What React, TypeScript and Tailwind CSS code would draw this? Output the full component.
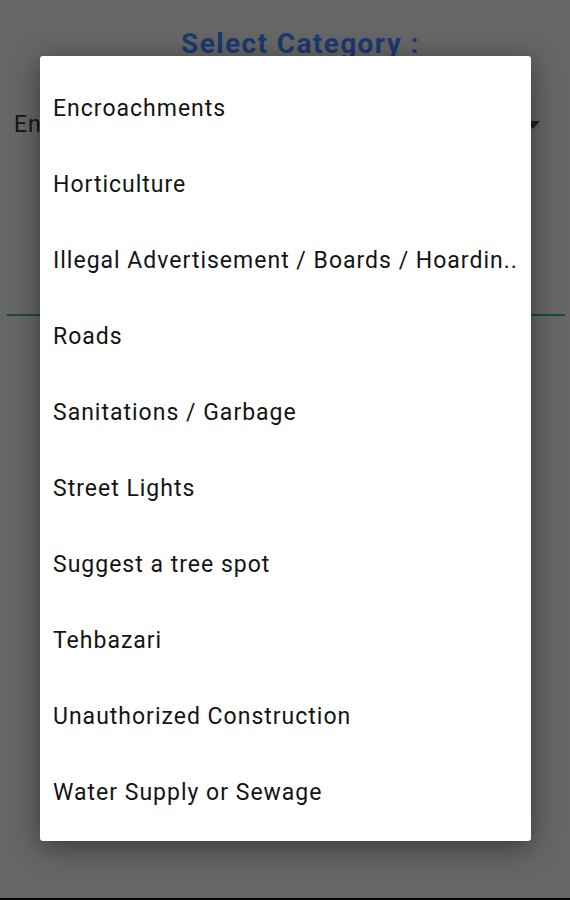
import React from "react";

const items = [
  "Encroachments",
  "Horticulture",
  "Illegal Advertisement / Boards / Hoardin..",
  "Roads",
  "Sanitations / Garbage",
  "Street Lights",
  "Suggest a tree spot",
  "Tehbazari",
  "Unauthorized Construction",
  "Water Supply or Sewage",
];

export default function App() {
  return (
    <div
      className="relative w-[570px] h-[900px] overflow-hidden bg-[#666666] flex flex-col"
      style={{ fontFamily: "Roboto, 'Noto Sans', sans-serif" }}
    >
      {/* background page (dimmed) */}
      <div className="flex-1 flex flex-col">
        <div className="pt-[28px] pl-[181px] text-[28px] leading-[32px] font-bold tracking-[1.4px] text-[#1a396f]">
          Select Category :
        </div>
        <div className="mt-[45px] flex items-center justify-between pl-[14px] pr-[30px] h-[40px]">
          <span className="w-[26px] overflow-hidden whitespace-nowrap text-[23px] tracking-[1px] text-[#151515]">
            Encroachments
          </span>
          <span className="w-0 h-0 border-l-[7px] border-r-[7px] border-t-[8px] border-l-transparent border-r-transparent border-t-[#222222]" />
        </div>
        <div className="mt-[169px] ml-[7px] mr-[5px] h-[2px] bg-[#174a3b]" />
      </div>
      <div className="h-[2px] bg-black" />

      {/* dialog */}
      <div className="absolute left-[40px] top-[56px] w-[491px] bg-white rounded-[3px] shadow-[0_6px_28px_rgba(0,0,0,0.45)] pt-[15px] pb-[10px]">
        {items.map((t) => (
          <div
            key={t}
            className="h-[76px] flex items-center pl-[13px] pr-[6px] text-[23px] tracking-[1px] text-[#141414] whitespace-nowrap overflow-hidden"
          >
            {t}
          </div>
        ))}
      </div>
    </div>
  );
}
